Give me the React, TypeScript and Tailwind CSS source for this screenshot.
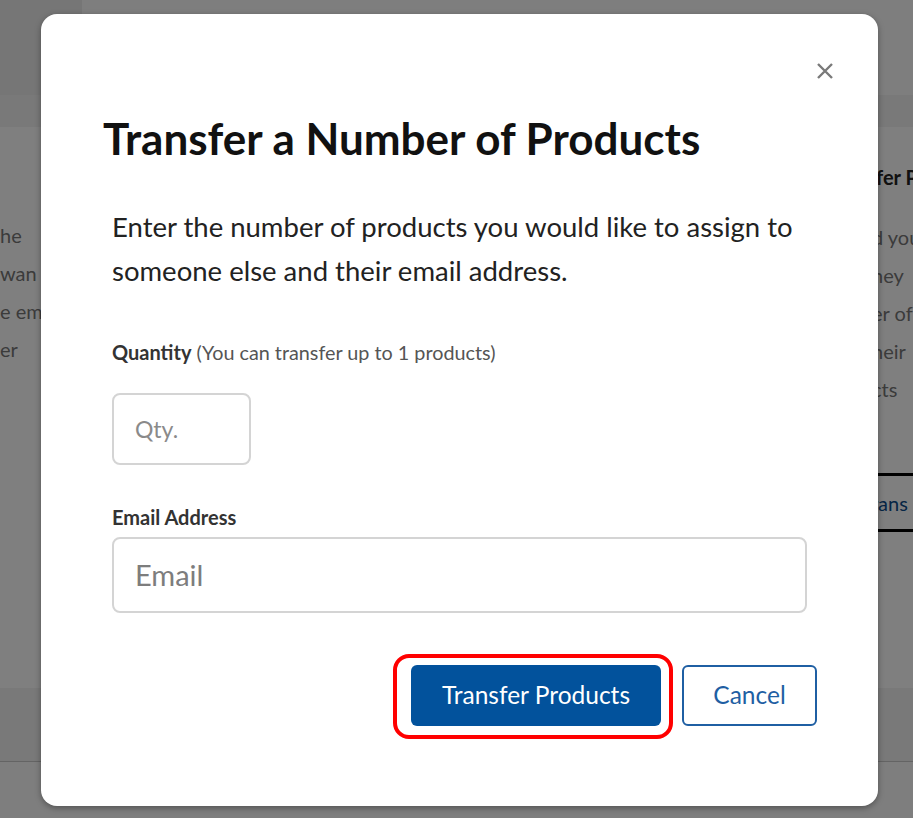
import React from "react";

function CloseIcon() {
  return (
    <svg width="18" height="18" viewBox="0 0 18 18" fill="none">
      <path d="M2 2 L16 16 M16 2 L2 16" stroke="#7a7a7a" strokeWidth="2.4" strokeLinecap="butt" />
    </svg>
  );
}

export default function App() {
  return (
    <div
      className="relative w-[913px] h-[818px] overflow-hidden bg-white"
      style={{ fontFamily: "Lato, 'Open Sans', sans-serif" }}
    >
      {/* Underlying page */}
      <div className="flex flex-col h-full">
        <div className="flex h-[95px] shrink-0">
          <div className="w-[82px] bg-[#ececec]" />
          <div className="flex-1 bg-[#fcfcfc]" />
        </div>
        <div className="h-[32px] shrink-0 bg-[#f3f3f3]" />
        <div className="h-[561px] shrink-0 bg-white flex justify-between">
          <div className="pt-[89px] text-[20px] leading-[38px] text-[#777] whitespace-nowrap">
            <div>he</div>
            <div>wan to</div>
            <div>e email</div>
            <div>er</div>
          </div>
          <div className="w-[37px] pt-[36px] whitespace-nowrap overflow-hidden">
            <div className="text-[20px] font-bold text-[#222] leading-[28px] ml-[0px]">fer Pr</div>
            <div className="mt-[27px] text-[20px] leading-[38px] text-[#777] ml-[-4px]">
              <div>d you</div>
              <div>hey</div>
              <div>er of</div>
              <div>heir</div>
              <div>cts</div>
            </div>
            <div className="mt-[65px] border-y-[3px] border-black h-[59px] flex items-center text-[20px] text-[#0a4a8a] ml-[-5px]">
              rans
            </div>
          </div>
        </div>
        <div className="h-[74px] shrink-0 bg-[#f3f3f3] border-b border-[#c8c8c8]" />
        <div className="flex-1 bg-[#fcfcfc]" />
      </div>

      {/* Overlay */}
      <div className="absolute inset-0 bg-black/50" />

      {/* Modal */}
      <div className="absolute left-[41px] top-[14px] w-[837px] h-[792px] bg-white rounded-[16px] shadow-[0_2px_6px_rgba(0,0,0,0.35)]">
        <button className="absolute right-[44px] top-[48px] p-0 leading-none" aria-label="Close">
          <CloseIcon />
        </button>
        <div className="px-[71px] pt-[98px]">
          <h1 className="ml-[-9px] text-[44px] leading-[52px] font-bold text-[#111]">
            Transfer a Number of Products
          </h1>
          <p className="mt-[41px] text-[27.5px] leading-[44px] text-[#222]">
            Enter the number of products you would like to assign to someone else and their email address.
          </p>
          <div className="mt-[46px] text-[20px] leading-[26px] text-[#333]">
            <span className="font-bold">Quantity</span>{" "}
            <span className="text-[19.8px] text-[#555]">(You can transfer up to 1 products)</span>
          </div>
          <div className="mt-[28px] w-[139px] h-[72px] rounded-[8px] border-2 border-[#d4d4d4] flex items-center px-[21px] text-[23px] text-[#8a8a8a]">
            Qty.
          </div>
          <div className="mt-[39px] text-[20px] leading-[26px] font-bold text-[#333]">Email Address</div>
          <div className="mt-[7px] w-[695px] h-[76px] rounded-[8px] border-2 border-[#d4d4d4] flex items-center px-[21px] text-[29px] text-[#7d7d7d]">
            Email
          </div>
          <div className="mt-[52px] mr-[-10px] flex justify-end gap-[21px]">
            <div className="relative">
              <span className="absolute left-[-18px] right-[-12px] top-[-11px] bottom-[-13px] rounded-[16px] border-[4px] border-[#ff0000]" />
              <button className="relative w-[250px] h-[61px] rounded-[6px] bg-[#02529c] text-white text-[24.5px]">
                Transfer Products
              </button>
            </div>
            <button className="w-[135px] h-[61px] rounded-[6px] border-2 border-[#1f5fa3] bg-white text-[#1f5fa3] text-[24.5px]">
              Cancel
            </button>
          </div>
        </div>
      </div>
    </div>
  );
}
